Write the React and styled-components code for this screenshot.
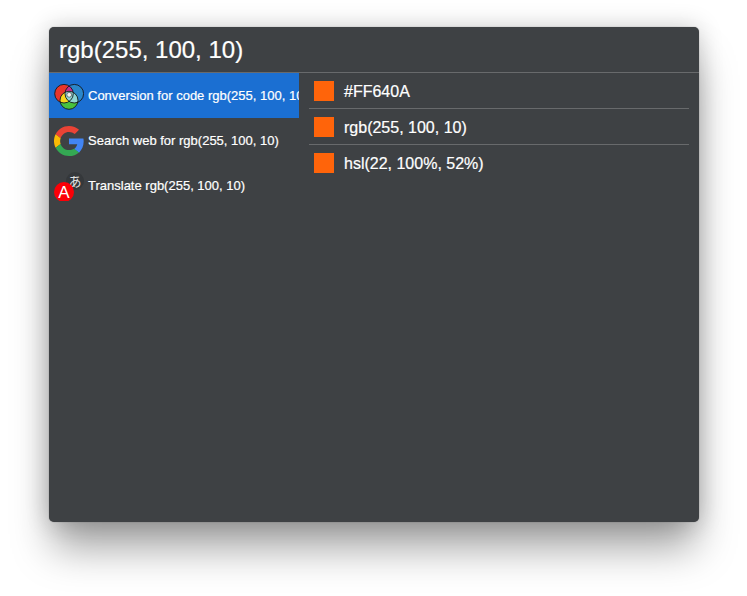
import React from 'react'
import styled, { createGlobalStyle } from 'styled-components'

const GlobalStyle = createGlobalStyle`
  html, body {
    margin: 0;
    height: 100%;
    background: #fff;
    overflow: hidden;
  }
`

const Page = styled.div`
  padding: 27px 48px 0 49px;
  font-family: "Liberation Sans", Arial, sans-serif;
  color: #fff;
`

const Win = styled.div`
  width: 650px;
  height: 495px;
  background: #3e4144;
  border-radius: 5px;
  overflow: hidden;
  box-shadow: 0 0 1px rgba(0, 0, 0, 0.5), 0 0 24px rgba(0, 0, 0, 0.2), 0 30px 40px -4px rgba(0, 0, 0, 0.36);
`

const Header = styled.div`
  height: 46px;
  box-sizing: border-box;
  padding: 0 10px;
  display: flex;
  align-items: center;
  font-size: 24px;
  -webkit-text-stroke: 0.2px #fff;
  border-bottom: 1px solid #686a6c;
`

const Body = styled.div`
  display: flex;
`

const List = styled.div`
  width: 250px;
  flex: none;
`

const Row = styled.div`
  height: 45px;
  display: flex;
  align-items: center;
  padding-left: 5px;
  font-size: 13px;
  -webkit-text-stroke: 0.2px #fff;
  white-space: nowrap;
  overflow: hidden;
  background: ${p => (p.$active ? '#1b6fd2' : 'transparent')};
`

const IconBox = styled.div`
  width: 30px;
  height: 30px;
  flex: none;
  margin-right: 4px;
`

const Detail = styled.div`
  flex: 1;
  padding: 0 10px;
`

const Item = styled.div`
  height: 36px;
  box-sizing: border-box;
  display: flex;
  align-items: center;
  gap: 10px;
  padding: 0 5px;
  font-size: 16px;
  -webkit-text-stroke: 0.2px #fff;
  border-bottom: ${p => (p.$last ? 'none' : '1px solid #686a6c')};
`

const Swatch = styled.div`
  width: 20px;
  height: 20px;
  background: #ff640a;
`

const Code = styled.span`
  padding-top: ${p => (p.$last ? '1px' : '2px')};
`

function MixIcon() {
  const edge = { fill: 'none', stroke: '#15181c', strokeWidth: 0.9 }
  return (
    <svg width="30" height="30" viewBox="0 0 30 30">
      <defs>
        <clipPath id="mix-red"><circle cx="10" cy="12.700" r="9.300" /></clipPath>
        <clipPath id="mix-blue"><circle cx="20.300" cy="12.700" r="9.300" /></clipPath>
      </defs>
      <circle cx="10" cy="12.700" r="9.300" fill="#e8352b" />
      <circle cx="20.300" cy="12.700" r="9.300" fill="#2a86c9" />
      <circle cx="15" cy="19.300" r="9" fill="#48c23d" />
      <g clipPath="url(#mix-red)">
        <circle cx="20.300" cy="12.700" r="9.300" fill="#c2308e" />
        <circle cx="15" cy="19.300" r="9" fill="#f7d51d" />
      </g>
      <g clipPath="url(#mix-blue)">
        <circle cx="15" cy="19.300" r="9" fill="#8fd5d2" />
      </g>
      <circle cx="10" cy="12.700" r="9.300" {...edge} />
      <circle cx="20.300" cy="12.700" r="9.300" {...edge} />
      <circle cx="15" cy="19.300" r="9" {...edge} />
      <circle cx="15.200" cy="13.800" r="2.400" fill="#eef2f2" stroke="#15181c" strokeWidth="0.5" />
    </svg>
  )
}

function GoogleIcon() {
  return (
    <svg width="30" height="30" viewBox="0 0 48 48">
      <path fill="#EA4335" d="M24 9.500c3.500 0 6.700 1.300 9.200 3.400l6.900-6.900C35.900 2.200 30.300 0 24 0 14.600 0 6.500 5.400 2.600 13.200l8 6.200C12.500 13.700 17.800 9.500 24 9.500z" />
      <path fill="#4285F4" d="M47.500 24.500c0-1.600-.2-3.200-.5-4.500H24v9.300h13.200c-.6 3-2.300 5.600-4.900 7.300l7.700 6c4.500-4.200 7.500-10.400 7.500-18.100z" />
      <path fill="#FBBC05" d="M10.600 28.600c-.5-1.400-.8-3-.8-4.600s.3-3.200.8-4.600l-8-6.200C.9 16.500 0 20.100 0 24s.9 7.500 2.600 10.800l8-6.200z" />
      <path fill="#34A853" d="M24 48c6.500 0 11.900-2.100 15.900-5.800l-7.700-6c-2.100 1.400-4.900 2.300-8.200 2.300-6.200 0-11.500-4.200-13.400-9.900l-8 6.200C6.500 42.600 14.600 48 24 48z" />
    </svg>
  )
}

function TranslateIcon() {
  return (
    <svg width="30" height="30" viewBox="0 0 30 30">
      <circle cx="21" cy="10" r="9" fill="#35383b" />
      <text x="21" y="15" fontSize="13" fill="#e4e4e4" textAnchor="middle" fontFamily="'Noto Sans CJK JP', sans-serif">あ</text>
      <circle cx="10" cy="21" r="10" fill="#fb0007" />
      <text x="10" y="27" fontSize="17" fill="#fff" textAnchor="middle" fontFamily="'Liberation Sans', sans-serif">A</text>
    </svg>
  )
}

const results = [
  { icon: <MixIcon />, label: 'Conversion for code rgb(255, 100, 10)', active: true },
  { icon: <GoogleIcon />, label: 'Search web for rgb(255, 100, 10)' },
  { icon: <TranslateIcon />, label: 'Translate rgb(255, 100, 10)' },
]

const codes = ['#FF640A', 'rgb(255, 100, 10)', 'hsl(22, 100%, 52%)']

export default function App() {
  return (
    <Page>
      <GlobalStyle />
      <Win>
        <Header>rgb(255, 100, 10)</Header>
        <Body>
          <List>
            {results.map(r => (
              <Row key={r.label} $active={r.active}>
                <IconBox>{r.icon}</IconBox>
                <span>{r.label}</span>
              </Row>
            ))}
          </List>
          <Detail>
            {codes.map((c, i) => (
              <Item key={c} $last={i === codes.length - 1}>
                <Swatch />
                <Code $last={i === codes.length - 1}>{c}</Code>
              </Item>
            ))}
          </Detail>
        </Body>
      </Win>
    </Page>
  )
}
